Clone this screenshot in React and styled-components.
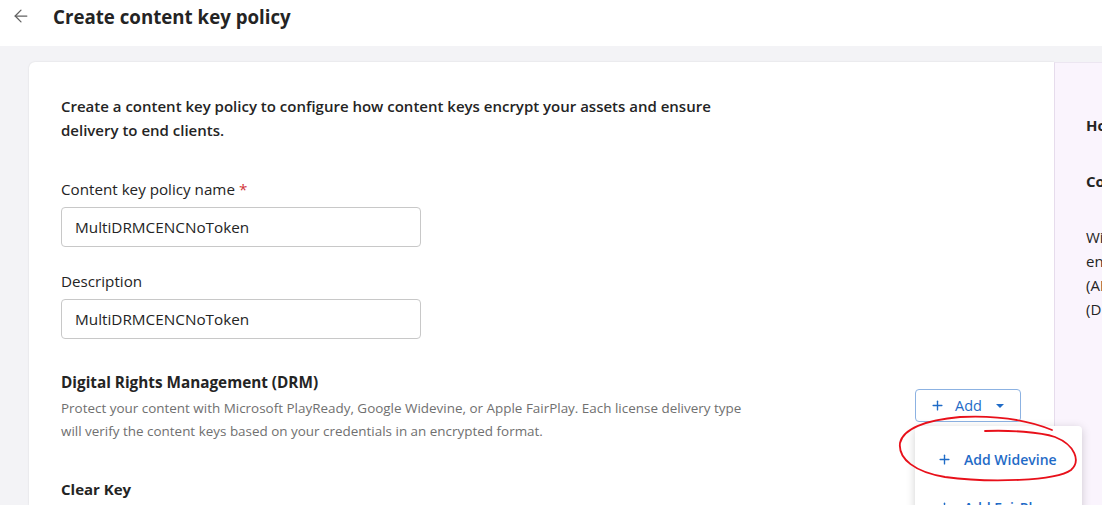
import styled, { createGlobalStyle } from 'styled-components';
import { ArrowLeft, Plus } from 'lucide-react';

const GlobalStyle = createGlobalStyle`
  html, body {
    margin: 0;
    padding: 0;
    background: #f3f3f6;
    overflow: hidden;
  }
  body {
    font-family: 'Open Sans', 'Noto Sans', sans-serif;
    color: #242424;
  }
  * {
    box-sizing: border-box;
  }
`;

const Root = styled.div`
  position: relative;
`;

const Page = styled.div`
  width: 1102px;
  height: 505px;
  overflow: hidden;
  display: flex;
  flex-direction: column;
`;

const Header = styled.header`
  height: 46px;
  flex-shrink: 0;
  background: #fff;
  display: flex;
  align-items: center;
  padding: 0 0 14px 11px;
`;

const BackButton = styled.button`
  border: none;
  background: transparent;
  padding: 0;
  display: flex;
  color: #616161;
  margin-right: 22px;
`;

const Title = styled.h1`
  margin: 0;
  font-size: 18.7px;
  font-weight: 700;
  color: #242424;
`;

const Body = styled.div`
  flex: 1;
  display: flex;
  padding: 16px 0 0 29px;
  min-height: 0;
`;

const Card = styled.main`
  width: 1025px;
  flex-shrink: 0;
  background: #fff;
  border-radius: 6px 0 0 0;
  box-shadow: 0 0 2px rgba(0, 0, 0, 0.12);
  padding: 32px 33px 0 32px;
`;

const Intro = styled.p`
  margin: 0 0 37px;
  width: 680px;
  font-size: 15px;
  font-weight: 600;
  line-height: 24px;
`;

const Field = styled.div`
  margin-bottom: 24px;
`;

const Label = styled.label`
  display: block;
  font-size: 15.2px;
  line-height: 20px;
  margin-bottom: 8px;
`;

const Required = styled.span`
  color: #d13438;
  margin-left: 4px;
`;

const Input = styled.input`
  width: 360px;
  height: 40px;
  border: 1px solid #c8c8c8;
  border-radius: 4px;
  padding: 0 13px;
  font-family: inherit;
  font-size: 15.3px;
  color: #242424;
  outline: none;
`;

const Section = styled.section`
  display: flex;
  align-items: flex-start;
  justify-content: space-between;
  margin-top: 33px;
`;

const SectionText = styled.div`
  width: 690px;
`;

const SectionTitle = styled.h2`
  margin: 0 0 5px;
  font-size: 15.3px;
  font-weight: 700;
  line-height: 20px;
`;

const SectionDesc = styled.p`
  margin: 0;
  font-size: 13.45px;
  line-height: 23px;
  color: #707070;
`;

const AddWrap = styled.div`
  position: relative;
  margin-top: 17px;
`;

const AddButton = styled.button`
  display: flex;
  align-items: center;
  width: 106px;
  height: 33px;
  padding: 0 0 0 14px;
  border: 1px solid #8cb2e2;
  border-radius: 4px;
  background: #fff;
  color: #1f6bc7;
  font-family: inherit;
  font-size: 14.5px;
  cursor: pointer;
  svg {
    stroke-width: 2.2;
  }
`;

const ButtonLabel = styled.span`
  margin-left: 10px;
`;

const Caret = styled.span`
  width: 0;
  height: 0;
  margin-left: 14px;
  border-left: 4.5px solid transparent;
  border-right: 4.5px solid transparent;
  border-top: 4.5px solid #1f6bc7;
`;

const Menu = styled.div`
  position: absolute;
  left: 0;
  top: 37px;
  width: 167px;
  background: #fff;
  border-radius: 4px;
  box-shadow: 0 2px 10px rgba(0, 0, 0, 0.18);
  padding: 9px 0;
  z-index: 2;
`;

const MenuItem = styled.div`
  display: flex;
  align-items: center;
  height: 48px;
  padding-left: 22px;
  color: #1f6bc7;
  font-size: 14px;
  font-weight: 600;
  white-space: nowrap;
  svg {
    margin-right: 12px;
    stroke-width: 2.2;
  }
`;

const ClearKey = styled(SectionTitle)`
  margin-top: 36px;
  font-size: 15px;
`;

const Panel = styled.aside`
  width: 320px;
  flex-shrink: 0;
  background: #faf4fd;
  border-left: 1px solid #e6dcec;
  border-top: 1px solid #ece6f1;
  padding: 50px 0 0 31px;
  font-size: 15px;
  line-height: 24px;
`;

const PanelTitle = styled.h3`
  margin: 0 0 32px;
  font-size: 15px;
  font-weight: 700;
`;

const PanelText = styled.p`
  margin: 0;
  white-space: nowrap;
`;

const Scribble = styled.svg`
  position: absolute;
  left: 0;
  top: 0;
  width: 1102px;
  height: 505px;
  pointer-events: none;
  z-index: 5;
`;

export default function App() {
  return (
    <Root>
      <GlobalStyle />
      <Page>
        <Header>
          <BackButton aria-label='Back'>
            <ArrowLeft size={20} strokeWidth={1.5} />
          </BackButton>
          <Title>Create content key policy</Title>
        </Header>
        <Body>
          <Card>
            <Intro>
              Create a content key policy to configure how content keys encrypt
              your assets and ensure delivery to end clients.
            </Intro>
            <Field>
              <Label>
                Content key policy name<Required>*</Required>
              </Label>
              <Input defaultValue='MultiDRMCENCNoToken' />
            </Field>
            <Field>
              <Label>Description</Label>
              <Input defaultValue='MultiDRMCENCNoToken' />
            </Field>
            <Section>
              <SectionText>
                <SectionTitle>Digital Rights Management (DRM)</SectionTitle>
                <SectionDesc>
                  Protect your content with Microsoft PlayReady, Google Widevine,
                  or Apple FairPlay. Each license delivery type will verify the
                  content keys based on your credentials in an encrypted format.
                </SectionDesc>
              </SectionText>
              <AddWrap>
                <AddButton>
                  <Plus size={15} />
                  <ButtonLabel>Add</ButtonLabel>
                  <Caret />
                </AddButton>
                <Menu>
                  <MenuItem>
                    <Plus size={15} />
                    Add Widevine
                  </MenuItem>
                  <MenuItem>
                    <Plus size={15} />
                    Add FairPlay
                  </MenuItem>
                </Menu>
              </AddWrap>
            </Section>
            <ClearKey>Clear Key</ClearKey>
          </Card>
          <Panel>
            <PanelTitle>How it works</PanelTitle>
            <PanelTitle>Content protection</PanelTitle>
            <PanelText>Widevine, PlayReady and FairPlay keys are</PanelText>
            <PanelText>encrypted using either</PanelText>
            <PanelText>(AES) Advanced Encryption Standard</PanelText>
            <PanelText>(DRM) Digital Rights Management</PanelText>
          </Panel>
        </Body>
      </Page>
      <Scribble viewBox='0 0 1102 505'>
        <path
          d='M 985 431 C 1010 430, 1040 432, 1055 437 C 1075 445, 1081 461, 1071 470 C 1056 481, 990 483, 945 477 C 915 472, 898 459, 900 443 C 903 429, 925 420, 960 417 C 1000 415, 1030 421, 1052 430'
          fill='none'
          stroke='#e8101a'
          strokeWidth='1.8'
          strokeLinecap='round'
        />
      </Scribble>
    </Root>
  );
}
